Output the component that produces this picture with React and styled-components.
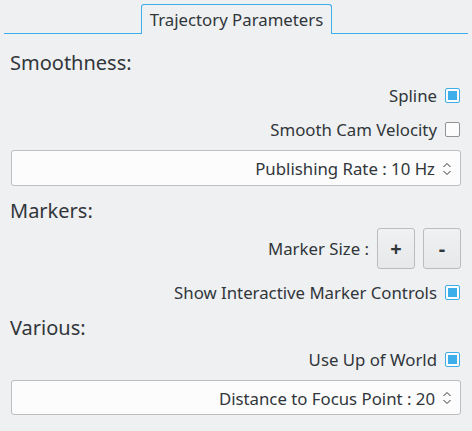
import styled, { createGlobalStyle } from "styled-components";

const GlobalStyle = createGlobalStyle`
    body {
        margin: 0;
        background: #eff0f1;
        font-family: "Noto Sans", sans-serif;
        color: #31363b;
    }
`

const Page = styled.div`
    width: 472px;
    height: 431px;
    padding-top: 4px;
    box-sizing: border-box;
    display: flex;
    flex-direction: column;
`

const TabBar = styled.div`
    display: flex;
    justify-content: center;
    margin: 0 4px;
    border-bottom: 1px solid #3daee9;
`

const Tab = styled.div`
    height: 30px;
    width: 191px;
    box-sizing: border-box;
    border: 1px solid #3daee9;
    border-bottom: none;
    border-radius: 3px 3px 0 0;
    background: #eff0f1;
    margin-bottom: -1px;
    margin-left: 1px;
    display: flex;
    align-items: center;
    justify-content: center;
    font-size: 16.8px;
`

const Content = styled.div`
    display: flex;
    flex-direction: column;
    padding: 0 11px 0 11px;
`

const Heading = styled.div`
    height: 30px;
    margin-top: ${props => props.top}px;
    margin-left: -1px;
    display: flex;
    align-items: center;
    font-size: 20px;
`

const Row = styled.div`
    height: ${props => props.h || 24}px;
    margin-top: ${props => props.top}px;
    display: flex;
    align-items: center;
    justify-content: flex-end;
    gap: 8px;
    font-size: 16.8px;
`

const Box = styled.span`
    width: 15px;
    height: 15px;
    box-sizing: border-box;
    border: 1px solid ${props => props.checked ? '#3daee9' : '#909294'};
    border-radius: 2px;
    background: #fcfcfc;
    display: flex;
    align-items: center;
    justify-content: center;
    margin-right: 1px;
    &::after {
        content: "";
        display: ${props => props.checked ? 'block' : 'none'};
        width: 9px;
        height: 9px;
        background: #3daee9;
    }
`

const Spin = styled.div`
    height: ${props => props.h}px;
    margin-top: ${props => props.top}px;
    box-sizing: border-box;
    border: 1px solid #bcbebf;
    border-radius: 3px;
    background: #fcfcfc;
    display: flex;
    align-items: center;
    justify-content: flex-end;
    gap: 7px;
    padding: 1px 8px 0 0;
    font-size: 16.8px;
`

const Button = styled.div`
    width: 38px;
    height: 41px;
    box-sizing: border-box;
    border: 1px solid #babcbe;
    border-radius: 3px;
    background: linear-gradient(#f0f1f2, #e7e8e9);
    display: flex;
    align-items: center;
    justify-content: center;
    font-size: 20px;
    font-weight: bold;
`

const Arrows = () => (
    <svg width="10" height="16" viewBox="0 0 10 16">
        <path d="M1.5 6 L5 2.5 L8.5 6 M1.5 10 L5 13.5 L8.5 10" fill="none" stroke="#31363b" strokeWidth="1" />
    </svg>
)

const Check = ({ label, checked, top }) => (
    <Row top={top}>
        {label}
        <Box checked={checked} />
    </Row>
)

export default function App() {
    return (
        <Page>
            <GlobalStyle />
            <TabBar>
                <Tab>Trajectory Parameters</Tab>
            </TabBar>
            <Content>
                <Heading top={13}>Smoothness:</Heading>
                <Check top={6} label="Spline" checked />
                <Check top={10} label="Smooth Cam Velocity" />
                <Spin top={9} h={36}>Publishing Rate : 10 Hz<Arrows /></Spin>
                <Heading top={9}>Markers:</Heading>
                <Row top={3} h={41}>
                    Marker Size :
                    <Button>+</Button>
                    <Button>-</Button>
                </Row>
                <Check top={11} label="Show Interactive Marker Controls" checked />
                <Heading top={8}>Various:</Heading>
                <Check top={5} label="Use Up of World" checked />
                <Spin top={9} h={35}>Distance to Focus Point : 20<Arrows /></Spin>
            </Content>
        </Page>
    )
}
